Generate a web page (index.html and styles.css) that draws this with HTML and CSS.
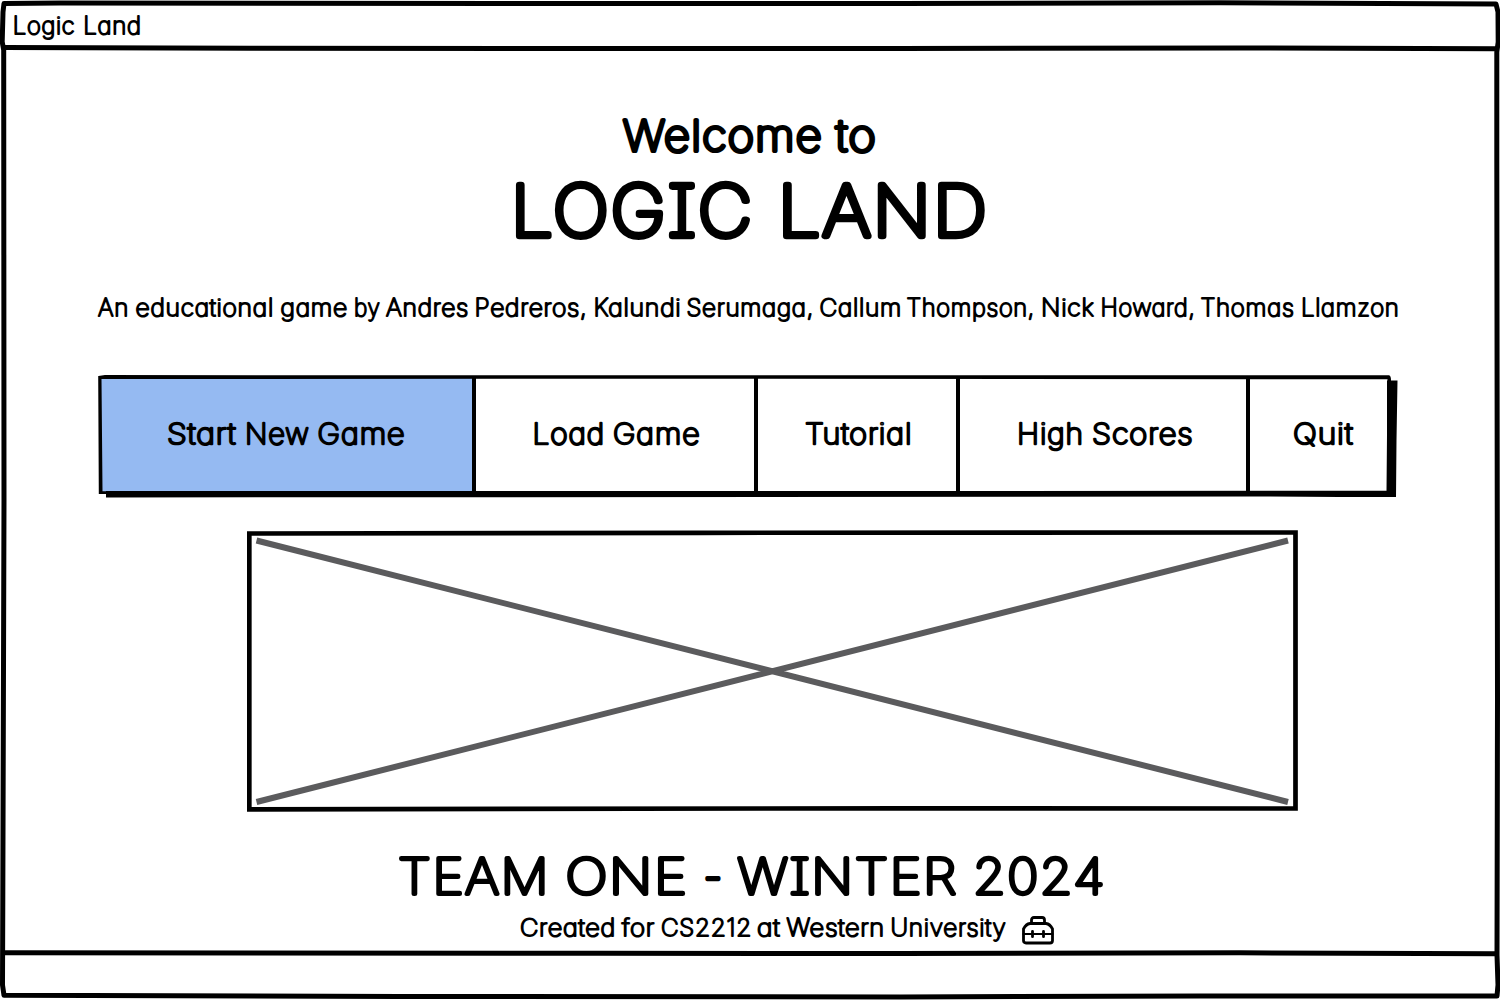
FILE: index.html
```html
<!DOCTYPE html>
<html lang="en">
<head>
<meta charset="utf-8">
<title>Logic Land</title>
<link rel="stylesheet" href="styles.css">
</head>
<body>
<div class="window">
  <header class="titlebar">
    <svg class="line" width="300" height="46"><text class="t small" y="33.5"><tspan x="12.8" textLength="62.500" lengthAdjust="spacingAndGlyphs">Logic</tspan> <tspan x="83.3" textLength="58.500" lengthAdjust="spacingAndGlyphs">Land</tspan></text></svg>
  </header>
  <main class="screen">
    <svg class="line welcome" width="1500" height="70"><text class="t medium" y="50.700"><tspan x="623" textLength="200" lengthAdjust="spacingAndGlyphs">Welcome</tspan> <tspan x="836" textLength="41" lengthAdjust="spacingAndGlyphs">to</tspan></text></svg>
    <svg class="line" width="1500" height="90"><text class="t huge" y="65.500"><tspan x="511" textLength="243" lengthAdjust="spacingAndGlyphs">LOGIC</tspan> <tspan x="778" textLength="211" lengthAdjust="spacingAndGlyphs">LAND</tspan></text></svg>
    <svg class="line authors" width="1500" height="60"><text class="t small" y="35.600"><tspan x="98" textLength="31" lengthAdjust="spacingAndGlyphs">An</tspan> <tspan x="135.500" textLength="138.500" lengthAdjust="spacingAndGlyphs">educational</tspan> <tspan x="280.500" textLength="67.500" lengthAdjust="spacingAndGlyphs">game</tspan> <tspan x="354" textLength="26.500" lengthAdjust="spacingAndGlyphs">by</tspan> <tspan x="386" textLength="83" lengthAdjust="spacingAndGlyphs">Andres</tspan> <tspan x="474.500" textLength="113" lengthAdjust="spacingAndGlyphs">Pedreros,</tspan> <tspan x="593.500" textLength="88" lengthAdjust="spacingAndGlyphs">Kalundi</tspan> <tspan x="686.500" textLength="127.500" lengthAdjust="spacingAndGlyphs">Serumaga,</tspan> <tspan x="819.500" textLength="82.500" lengthAdjust="spacingAndGlyphs">Callum</tspan> <tspan x="906.500" textLength="128.500" lengthAdjust="spacingAndGlyphs">Thompson,</tspan> <tspan x="1041" textLength="53.500" lengthAdjust="spacingAndGlyphs">Nick</tspan> <tspan x="1100.500" textLength="95" lengthAdjust="spacingAndGlyphs">Howard,</tspan> <tspan x="1200.500" textLength="94" lengthAdjust="spacingAndGlyphs">Thomas</tspan> <tspan x="1301" textLength="98.500" lengthAdjust="spacingAndGlyphs">Llamzon</tspan></text></svg>

    <nav class="menu">
      <button class="item active"><svg class="line" width="371" height="112"><text class="t label" y="64.700"><tspan x="66" textLength="69.500" lengthAdjust="spacingAndGlyphs">Start</tspan> <tspan x="144" textLength="64.500" lengthAdjust="spacingAndGlyphs">New</tspan> <tspan x="216.500" textLength="88" lengthAdjust="spacingAndGlyphs">Game</tspan></text></svg></button>
      <button class="item"><svg class="line" width="278" height="112"><text class="t label" y="64.700"><tspan x="56.500" textLength="72.500" lengthAdjust="spacingAndGlyphs">Load</tspan> <tspan x="137" textLength="87.500" lengthAdjust="spacingAndGlyphs">Game</tspan></text></svg></button>
      <button class="item"><svg class="line" width="198" height="112"><text class="t label" y="64.700"><tspan x="47" textLength="107.500" lengthAdjust="spacingAndGlyphs">Tutorial</tspan></text></svg></button>
      <button class="item"><svg class="line" width="286" height="112"><text class="t label" y="64.700"><tspan x="57" textLength="67" lengthAdjust="spacingAndGlyphs">High</tspan> <tspan x="132" textLength="101.500" lengthAdjust="spacingAndGlyphs">Scores</tspan></text></svg></button>
      <button class="item"><svg class="line" width="137" height="112"><text class="t label" y="64.700"><tspan x="43" textLength="60.500" lengthAdjust="spacingAndGlyphs">Quit</tspan></text></svg></button>
      <svg class="outline" width="1300" height="124" viewBox="98 374 1300 124">
        <path class="ink" d="M106 491H1387V380.500H1397.500L1396.500 440L1396 497H1340L1250 496.500L106 497.500Z"/>
        <path class="ink" d="M98.500 376L105 375L330 375.300L1389 375.200Q1391 376 1391 380L1390.500 494H98.800L98.200 376ZM101.500 379L102.500 491.200L1386.500 490.800L1387.500 379.300L700 378.800Z" fill-rule="evenodd"/>
      </svg>
    </nav>

    <svg class="picture" width="1052" height="282" viewBox="247 530 1052 282">
      <path class="cross" d="M256.500 540.500L1288 802M256.500 802L1288 540.500"/>
      <path class="edge" d="M249.300 533.500L700 532.800L1295.500 532.500V808.500L900 808.300L249.300 809.300Z"/>
    </svg>

    <svg class="line team" width="1500" height="65"><text class="t large" y="53.900"><tspan x="398" textLength="152" lengthAdjust="spacingAndGlyphs">TEAM</tspan> <tspan x="565.500" textLength="123" lengthAdjust="spacingAndGlyphs">ONE</tspan> <tspan x="703.500" textLength="20" lengthAdjust="spacingAndGlyphs">-</tspan> <tspan x="737.500" textLength="220.500" lengthAdjust="spacingAndGlyphs">WINTER</tspan> <tspan x="973" textLength="133" lengthAdjust="spacingAndGlyphs">2024</tspan></text></svg>
    <svg class="line" width="1500" height="45"><text class="t small" y="30.500"><tspan x="520" textLength="96" lengthAdjust="spacingAndGlyphs">Created</tspan> <tspan x="622" textLength="33" lengthAdjust="spacingAndGlyphs">for</tspan> <tspan x="661" textLength="91" lengthAdjust="spacingAndGlyphs">CS2212</tspan> <tspan x="757" textLength="23.500" lengthAdjust="spacingAndGlyphs">at</tspan> <tspan x="786.500" textLength="98.500" lengthAdjust="spacingAndGlyphs">Western</tspan> <tspan x="890.500" textLength="116" lengthAdjust="spacingAndGlyphs">University</tspan></text>
      <g class="toolbox" transform="translate(1022 11)">
        <path d="M9.500 7V4Q9.500 1.500 12 1.500H20Q22.500 1.500 22.500 4V7"/>
        <path d="M8 7.500H24Q28 8 30.500 13V24.500Q30.500 27 28 27H4Q1.500 27 1.500 24.500V13Q4 8 8 7.500Z"/>
        <path class="thin" d="M1.500 18H30.500"/>
        <path d="M10.500 15.300V20.700M21.500 15.300V20.700"/>
      </g>
    </svg>
  </main>
  <svg class="frame" width="1500" height="1000">
    <path d="M4 3.500L60 3L500 3.500L900 3.500L1220 2.800L1496 4L1498 12L1498.200 42L1496.800 52L1496.800 160L1497.500 700L1497 955L1498 985L1497 996L1200 996L900 997L400 996.500L4 995.300L2.500 985L2.800 900L4 500L3.700 50L2.200 42L3 12Z"/>
    <path d="M4 47.500L250 48.300L900 48.500L1240 48L1497 48.800"/>
    <path d="M4 952.800L600 953.300L900 953.500L1240 952.800L1497 953.800"/>
  </svg>
</div>
</body>
</html>
```
FILE: styles.css
```css
* { box-sizing: border-box; }

body {
  margin: 0;
  background: #fff;
  color: #000;
}

.window {
  position: relative;
  display: flex;
  flex-direction: column;
  width: 1500px;
  height: 1000px;
  overflow: hidden;
}

.titlebar { height: 50px; flex: none; }

.screen {
  display: flex;
  flex-direction: column;
  align-items: flex-start;
  padding-top: 50px;
}

.line { display: block; flex: none; overflow: visible; }
.authors { margin-top: 20px; }

/* Thin letterforms thickened with a round-joined stroke give a marker-pen look */
.t {
  font-family: Inter, "Liberation Sans", sans-serif;
  font-weight: 100;
  font-feature-settings: "cv11" 1, "cv08" 1, "calt" 0;
  letter-spacing: .03em;
  fill: #000;
  stroke: #000;
  stroke-linejoin: round;
}
.small { font-size: 23.5px; stroke-width: 2px; }
.label { font-size: 28.5px; stroke-width: 2.5px; }
.medium { font-size: 42.5px; stroke-width: 4.2px; }
.large { font-size: 49px; stroke-width: 4.2px; }
.huge { font-size: 70.5px; stroke-width: 6.6px; }

.menu {
  position: relative;
  display: grid;
  grid-template-columns: 375px 282px 202px 290px 139px;
  width: 1288px;
  height: 118px;
  margin: 36px 0 0 101px;
  padding-top: 2px;
}
.item {
  height: 114px;
  margin: 0;
  padding: 0;
  border: 0;
  border-right: 4px solid #000;
  background: #fff;
  text-align: left;
}
.item.active { background: #95baf2; }
.item:last-of-type { border-right: 0; }
.outline {
  position: absolute;
  left: -3px;
  top: -2px;
  pointer-events: none;
}
.ink { fill: #000; }

.picture { display: block; margin: 36px 0 0 247px; }
.cross { fill: none; stroke: #5b5b5d; stroke-width: 6px; }
.edge { fill: none; stroke: #000; stroke-width: 4.7px; }

.team { margin-top: 28px; }
.toolbox {
  fill: none;
  stroke: #000;
  stroke-width: 2.8px;
  stroke-linecap: round;
  stroke-linejoin: round;
}
.thin { stroke-width: 2.2px; }

.frame { position: absolute; inset: 0; pointer-events: none; }
.frame path { fill: none; stroke: #000; stroke-width: 5px; stroke-linejoin: round; }
```
